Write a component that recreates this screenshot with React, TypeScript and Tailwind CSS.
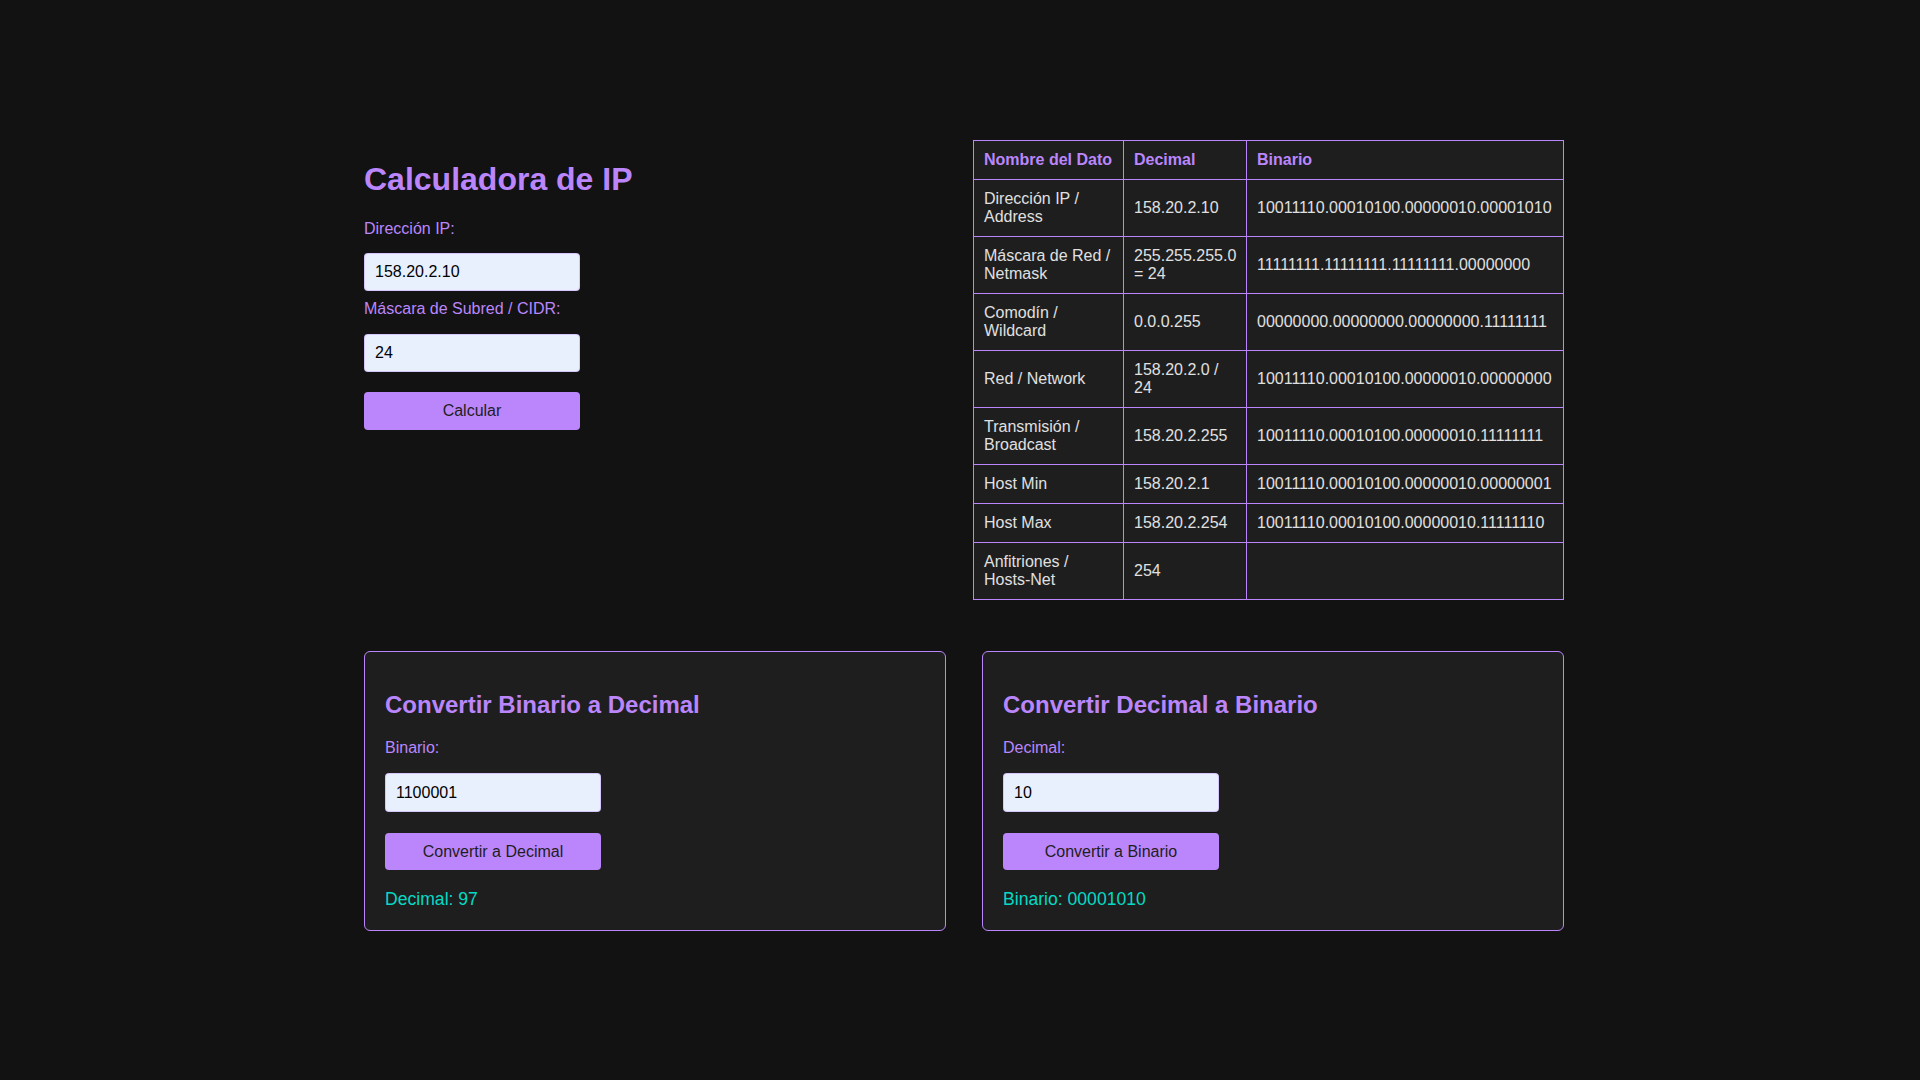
import React, { useState } from "react";

const rows = [
  { name: "Dirección IP / Address", dec: "158.20.2.10", bin: "10011110.00010100.00000010.00001010" },
  { name: "Máscara de Red / Netmask", dec: "255.255.255.0 = 24", bin: "11111111.11111111.11111111.00000000" },
  { name: "Comodín / Wildcard", dec: "0.0.0.255", bin: "00000000.00000000.00000000.11111111" },
  { name: "Red / Network", dec: "158.20.2.0 / 24", bin: "10011110.00010100.00000010.00000000" },
  { name: "Transmisión / Broadcast", dec: "158.20.2.255", bin: "10011110.00010100.00000010.11111111" },
  { name: "Host Min", dec: "158.20.2.1", bin: "10011110.00010100.00000010.00000001" },
  { name: "Host Max", dec: "158.20.2.254", bin: "10011110.00010100.00000010.11111110" },
  { name: "Anfitriones / Hosts-Net", dec: "254", bin: "" },
];

const inputCls =
  "block w-[216px] h-[38px] px-[10px] rounded-[4px] border border-[#bb86fc]/40 bg-[#e8f0fe] text-[16px] text-black outline-none";
const buttonCls =
  "block w-[216px] rounded-[4px] bg-[#bb86fc] text-[16px] text-[#1e1e1e]";

const Converter = ({
  title,
  label,
  initial,
  button,
  convert,
}: {
  title: string;
  label: string;
  initial: string;
  button: string;
  convert: (v: string) => string;
}) => {
  const [value, setValue] = useState(initial);
  const [result, setResult] = useState(convert(initial));
  return (
    <div className="w-[582px] rounded-[6px] border border-[#bb86fc] bg-[#1e1e1e] px-[20px] pt-[20px] pb-[21px]">
      <h2 className="mt-[19px] text-[24px] leading-[28px] font-bold text-[#bb86fc]">{title}</h2>
      <label className="mt-[20px] block leading-[18.4px] text-[#bb86fc]">{label}</label>
      <input
        value={value}
        onChange={(e) => setValue(e.target.value)}
        className={`${inputCls} mt-[16px] h-[39px]`}
      />
      <button onClick={() => setResult(convert(value))} className={`${buttonCls} mt-[21px] h-[37px]`}>
        {button}
      </button>
      <div className="mt-[19px] text-[17.6px] leading-[20px] text-[#03dac6]">{result}</div>
    </div>
  );
};

const App = () => {
  return (
    <div className="min-h-screen bg-[#121212] pl-2 pt-[140px] font-['Liberation_Sans',Arial,sans-serif] text-[16px]">
      <div className="mx-auto w-[1200px]">
        <div className="flex items-start justify-between">
          <div className="pt-[21px]">
            <h1 className="text-[32px] leading-[37px] font-bold text-[#bb86fc]">Calculadora de IP</h1>
            <label className="mt-[22px] block leading-[18.4px] text-[#bb86fc]">Dirección IP:</label>
            <input defaultValue="158.20.2.10" className={`${inputCls} mt-[15px]`} />
            <label className="mt-[9px] block leading-[18.4px] text-[#bb86fc]">Máscara de Subred / CIDR:</label>
            <input defaultValue="24" className={`${inputCls} mt-[15px]`} />
            <button className={`${buttonCls} mt-[20px] h-[38px]`}>Calcular</button>
          </div>

          <table className="w-[590px] table-fixed border-collapse bg-[#1e1e1e] text-[16px] leading-[18px] text-[#e0e0e0]">
            <colgroup>
              <col className="w-[150px]" />
              <col className="w-[123px]" />
              <col className="w-[317px]" />
            </colgroup>
            <thead>
              <tr>
                <th className="border border-[#bb86fc] p-[10px] text-left font-bold text-[#bb86fc]">Nombre del Dato</th>
                <th className="border border-[#bb86fc] p-[10px] text-left font-bold text-[#bb86fc]">Decimal</th>
                <th className="border border-[#bb86fc] p-[10px] text-left font-bold text-[#bb86fc]">Binario</th>
              </tr>
            </thead>
            <tbody>
              {rows.map((r) => (
                <tr key={r.name}>
                  <td className="border border-[#bb86fc] p-[10px] align-middle">{r.name}</td>
                  <td className="border border-[#bb86fc] p-[10px] align-middle">{r.dec}</td>
                  <td className="border border-[#bb86fc] p-[10px] align-middle whitespace-nowrap">{r.bin}</td>
                </tr>
              ))}
            </tbody>
          </table>
        </div>

        <div className="mt-[51px] flex justify-between">
          <Converter
            title="Convertir Binario a Decimal"
            label="Binario:"
            initial="1100001"
            button="Convertir a Decimal"
            convert={(v) => `Decimal: ${parseInt(v || "0", 2) || 0}`}
          />
          <Converter
            title="Convertir Decimal a Binario"
            label="Decimal:"
            initial="10"
            button="Convertir a Binario"
            convert={(v) => `Binario: ${(parseInt(v || "0", 10) || 0).toString(2).padStart(8, "0")}`}
          />
        </div>
      </div>
    </div>
  );
};

export default App;
